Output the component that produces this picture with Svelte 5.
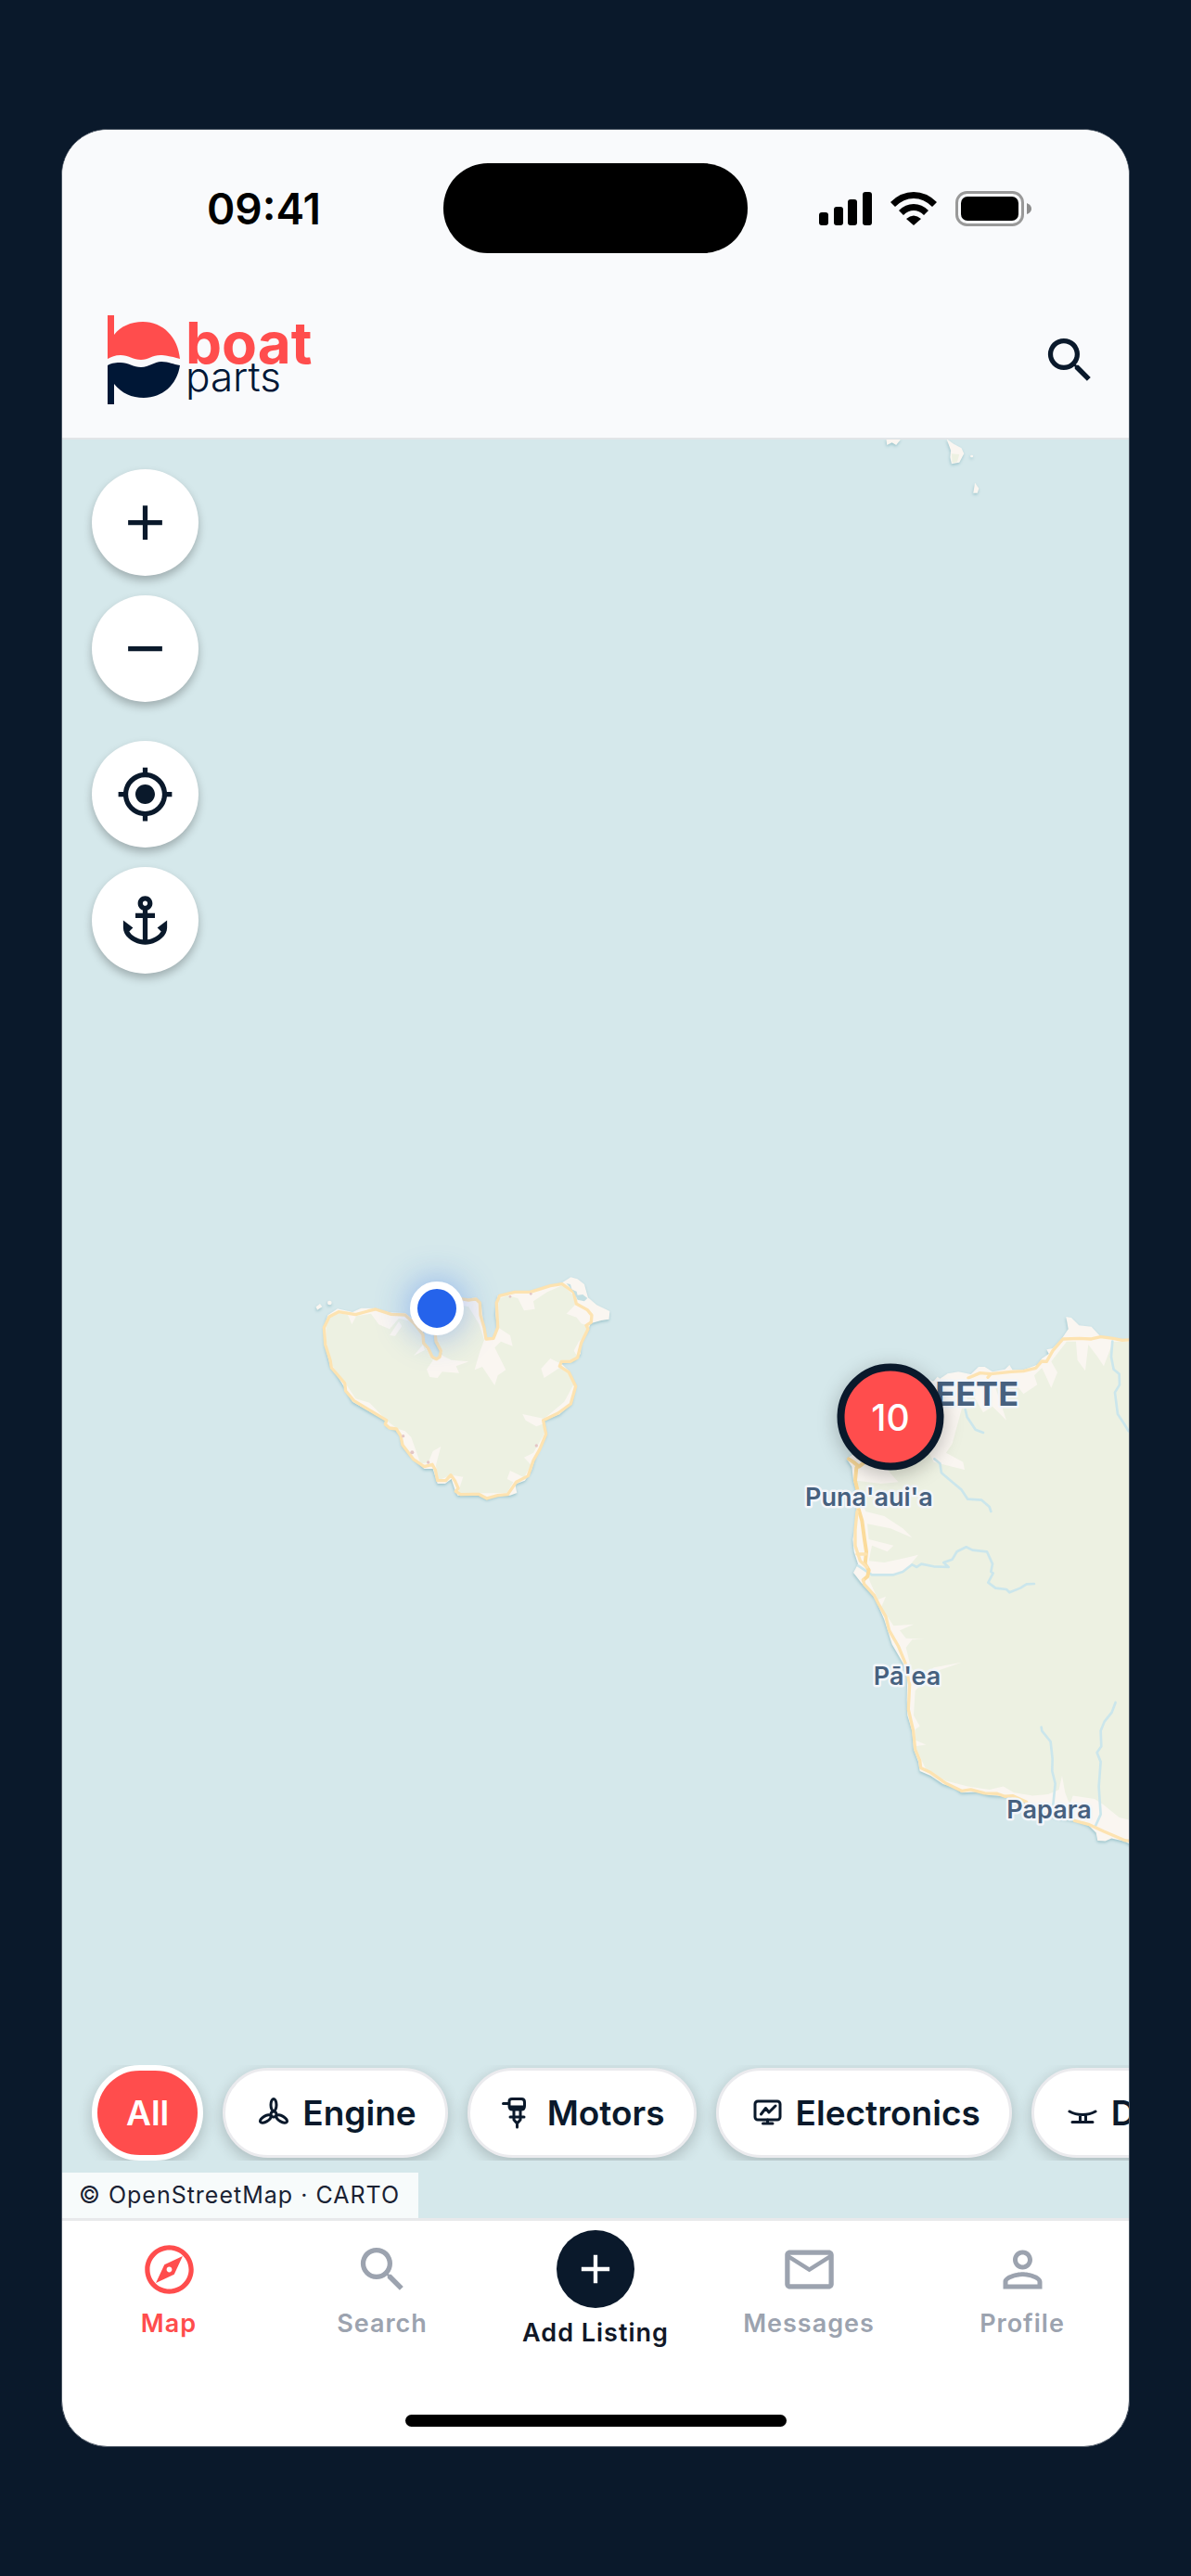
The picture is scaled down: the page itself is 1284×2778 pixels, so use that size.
<script>
  const icons = {
    search:
      'M15.5 14h-.79l-.28-.27A6.471 6.471 0 0 0 16 9.5 6.5 6.5 0 1 0 9.5 16c1.61 0 3.09-.59 4.23-1.57l.27.28v.79l5 4.99L20.49 19l-4.99-5zm-6 0C7.01 14 5 11.99 5 9.5S7.01 5 9.5 5 14 7.01 14 9.5 11.99 14 9.5 14z',
    add: 'M19 13h-6v6h-2v-6H5v-2h6V5h2v6h6v2z',
    remove: 'M19 13H5v-2h14v2z',
    locate:
      'M12 8c-2.21 0-4 1.79-4 4s1.79 4 4 4 4-1.79 4-4-1.79-4-4-4zm8.94 3A8.994 8.994 0 0 0 13 3.06V1h-2v2.06A8.994 8.994 0 0 0 3.06 11H1v2h2.06A8.994 8.994 0 0 0 11 20.94V23h2v-2.06A8.994 8.994 0 0 0 20.94 13H23v-2h-2.06zM12 19c-3.87 0-7-3.13-7-7s3.13-7 7-7 7 3.13 7 7-3.13 7-7 7z',
    anchor:
      'M17 15l1.55 1.55c-.96 1.69-3.33 3.04-5.55 3.37V11h3V9h-3V7.82C14.16 7.4 15 6.3 15 5c0-1.65-1.35-3-3-3S9 3.35 9 5c0 1.3.84 2.4 2 2.82V9H8v2h3v8.92c-2.22-.33-4.59-1.68-5.55-3.37L7 15l-4-3v3c0 3.88 4.92 7 9 7s9-3.12 9-7v-3l-4 3zM12 4c.55 0 1 .45 1 1s-.45 1-1 1-1-.45-1-1 .45-1 1-1z',
    explore:
      'M12 2C6.48 2 2 6.48 2 12s4.48 10 10 10 10-4.48 10-10S17.52 2 12 2zm0 18c-4.41 0-8-3.59-8-8s3.59-8 8-8 8 3.59 8 8-3.59 8-8 8zm-5.5-2.5l7.51-3.49L17.5 6.5 9.99 9.99 6.5 17.5zm5.5-6.6c.61 0 1.1.49 1.1 1.1s-.49 1.1-1.1 1.1-1.1-.49-1.1-1.1.49-1.1 1.1-1.1z',
    mail: 'M22 6c0-1.1-.9-2-2-2H4c-1.1 0-2 .9-2 2v12c0 1.1.9 2 2 2h16c1.1 0 2-.9 2-2V6zm-2 0l-8 5-8-5h16zm0 12H4V8l8 5 8-5v10z',
    person:
      'M12 5.9c1.16 0 2.1.94 2.1 2.1s-.94 2.1-2.1 2.1S9.9 9.16 9.9 8s.94-2.1 2.1-2.1m0 9c2.97 0 6.1 1.46 6.1 2.1v1.1H5.9V17c0-.64 3.13-2.1 6.1-2.1M12 4C9.79 4 8 5.79 8 8s1.79 4 4 4 4-1.79 4-4-1.79-4-4-4zm0 9c-2.67 0-8 1.34-8 4v3h16v-3c0-2.66-5.33-4-8-4z',
  };

  const tabs = [
    { id: 'map', label: 'Map', icon: 'explore' },
    { id: 'search', label: 'Search', icon: 'search' },
    { id: 'add', label: 'Add Listing', icon: 'add' },
    { id: 'messages', label: 'Messages', icon: 'mail' },
    { id: 'profile', label: 'Profile', icon: 'person' },
  ];
  const filters = ['All', 'Engine', 'Motors', 'Electronics', 'Deck'];

  let activeTab = $state('map');
  let activeFilter = $state('All');
</script>

{#snippet icon(name)}
  <svg class="icon" viewBox="0 0 24 24" aria-hidden="true"><path d={icons[name]} /></svg>
{/snippet}

<div class="stage">
  <main class="phone">
    <div class="status">
      <span class="time">09:41</span>
      <span class="island"></span>
      <span class="signals">
        <svg width="57" height="38" viewBox="0 0 57 38" aria-hidden="true">
          <rect x="0" y="23" width="10" height="14" rx="3" />
          <rect x="16" y="17" width="10" height="20" rx="3" />
          <rect x="31" y="9" width="10" height="28" rx="3" />
          <rect x="47" y="1" width="10" height="36" rx="3" />
        </svg>
        <svg width="50" height="38" viewBox="0 0 50 38" aria-hidden="true">
          <path d="M0 12Q11 1 25 1T50 12L45 17Q36 8 25 8T5 17Z" />
          <path d="M9 21Q16 14 25 14T41 21L36 26Q31 21 25 21T14 26Z" />
          <path d="M17 30Q25 23 33 30L25 37Z" />
        </svg>
        <svg width="82" height="38" viewBox="0 0 82 38" aria-hidden="true">
          <rect x="1.5" y="1.5" width="71" height="35" rx="11" fill="none" stroke="#999" stroke-width="3" />
          <rect x="6" y="6" width="62" height="26" rx="7" />
          <path d="M77 13Q82 15 82 19T77 25Z" fill="#8c8c8c" />
        </svg>
      </span>
    </div>

    <header class="header">
      <a class="brand" href="#home" aria-label="boat parts">
        <svg class="mark" viewBox="0 0 78 96" aria-hidden="true">
          <path
            fill="#ff4d4d"
            d="M0 0H7V21C14 12 25 7 38 7C60 7 76 24 78 47C67 44 62 43 57 43C48 43 44 48 36 48C28 48 22 43 14 43C8 43 4 45 0 47Z"
          />
          <path
            fill="#001736"
            d="M0 54C5 51 10 51 14 51C22 51 28 56 36 56C45 56 50 50 58 50C66 50 71 53 78 54C75 75 59 89 39 89C26 89 15 84 7 74V96H0Z"
          />
        </svg>
        <span class="wordmark"><span class="boat">boat</span><span class="parts">parts</span></span>
      </a>
      <button class="search" aria-label="Search">{@render icon('search')}</button>
    </header>

    <section class="map" aria-label="Map">
      <svg class="chart" viewBox="67 474 1150 1918" preserveAspectRatio="xMidYMid slice" aria-hidden="true">
        <!-- Tetiaroa -->
        <g class="land" transform="translate(660 130) scale(.3827 .3333)">
          <path class="sand" d="M772 1030H814L800 1050L788 1042L774 1050Z" />
          <path class="sand" d="M942 1030L962 1046L984 1060L991 1078L978 1106L956 1111L952 1090L954 1068Z" />
          <path class="green" d="M956 1078L978 1080L972 1104L958 1108Z" />
          <path class="sand" d="M1022 1172L1033 1190L1029 1205H1017Z" />
          <circle class="sand" cx="1013" cy="1086" r="4" />
        </g>

        <!-- Moorea -->
        <g transform="translate(320 1350) scale(.3333)">
          <g class="land">
            <path
              class="sand"
              d="M100 205L132 184L180 195L208 182L250 182L300 196L350 198L385 225L408 250L408 292L440 348L458 350L470 330L448 290L446 262L500 160L548 152L580 148L596 165L602 215L610 280L636 282L650 250L642 200L650 142L700 128L750 128L820 108L858 100L886 82L908 88L930 105L942 148L970 172L1012 192L1010 218L985 222L950 232L944 250L920 290L918 330L896 352L852 358L880 385L902 430L890 490L850 526L800 545L808 590L775 655L760 705L738 740L706 752L712 780L690 788L655 788L615 800L590 788L520 788L512 772L500 735L480 750L455 750L440 702L412 702L370 660L340 625L335 590L320 575L290 562L286 545L240 520L180 485L155 440L130 400L108 370L90 300L88 245Z"
            />
            <path class="sand" d="M62 178L75 168L82 178L66 188Z" />
            <circle class="sand" cx="106" cy="165" r="7" />
          </g>
          <path
            class="green"
            d="M108 214L135 198L165 204L178 235L192 208L240 200L265 235L300 250L330 215L370 225L405 262L408 296L440 352L420 380L430 405L455 408L470 388L525 392L515 370L556 355L500 350L470 335L470 318L452 290L448 268L520 170L556 178L590 235L606 285L590 330L575 382L600 372L640 432L650 400L676 382L655 340L640 310L660 290L698 305L690 270L652 245L652 152L682 142L715 150L735 190L770 185L765 160L810 130L860 108L895 140L900 172L872 200L905 212L920 232L945 240L930 275L912 290L896 320L912 345L850 360L820 345L790 378L800 408L850 375L880 395L895 430L865 485L800 540L730 525L740 545L775 565L800 555L800 590L765 650L735 665L758 690L735 730L690 708L680 735L700 745L680 780L520 782L538 728L500 722L455 740L450 690L466 630L440 645L425 682L400 685L370 600L350 580L325 572L290 545L235 488L190 475L160 430L112 365L95 290L95 240Z"
          />
          <path class="sand" d="M300 270L330 225L340 240L318 272ZM378 336L408 300L414 318ZM456 340L520 358L500 388L448 372Z" />
          <path
            class="road"
            d="M448 270L450 290L466 320L462 340L452 347L438 340L425 312L410 295L408 268L380 232L350 204L305 202L255 186L230 192L190 203L135 194L105 210L88 245L92 300L108 350L112 375L155 425L158 450L185 482L240 515L290 545L286 558L300 570L322 573L336 595L342 625L378 672L412 695L438 688L448 705L455 740L482 740L498 722L512 742L522 765L514 775L530 785L588 784L615 798L650 788L682 785L710 745L748 725L765 675L785 640L806 590L797 545L845 522L886 492L902 435L880 390L850 370L856 355L885 355L908 342L920 295L942 250L936 238L952 228L954 205L940 188L904 168L895 130L858 104L820 110L755 130L705 130L656 142L646 165L650 245L636 280L612 282L606 245L594 205L592 165L580 153L555 156L530 152"
          />
          <path class="sea" d="M872 102L885 105L890 122L905 128L908 140L925 138L940 150L930 160L908 155L896 130Z" />
          <g fill="#e3c6c6">
            <circle cx="344" cy="596" r="5" /><circle cx="373" cy="649" r="6" /><circle cx="425" cy="681" r="5" />
            <circle cx="775" cy="627" r="5" /><circle cx="690" cy="145" r="4" /><circle cx="757" cy="136" r="4" />
          </g>
        </g>

        <!-- Tahiti -->
        <g transform="translate(840 1400) scale(.3333)">
          <g class="land">
            <path
              class="sand"
              d="M400 300L500 268L512 254L520 260L545 244L580 238L620 246L645 222L665 222L690 238L730 230L745 216L755 232L790 232L835 215L850 195L872 180L865 166L885 162L915 130L935 100L928 60L945 63L970 88L1010 92L1038 122L1080 130L1140 136V1770L1120 1758L1075 1748L1055 1757L1030 1755L1025 1730L1000 1705L960 1690L900 1680L830 1655L780 1625L740 1612L680 1608L640 1598L590 1600L570 1585L530 1572L490 1545L455 1530L450 1500L435 1460L430 1400L415 1350L413 1300L415 1220L400 1180L365 1120L340 1040L310 970L265 920L240 888L255 860L242 820L238 780L245 740L250 690L255 640L240 590L235 545L218 520L235 508L300 420Z"
            />
          </g>
          <path
            class="green"
            d="M590 360L620 300L660 370L690 350L735 395L700 290L760 270L790 310L835 280L825 250L850 225L880 290L900 240L880 205L930 140L960 140L965 200L990 235L1000 150L1030 190L1050 220L1080 140L1140 140V1690L1100 1680L1050 1640L1020 1620L950 1610L940 1640L925 1600L915 1545L905 1590L870 1605L820 1610L760 1600L725 1580L680 1590L610 1580L540 1562L475 1525L440 1450L475 1445L440 1430L440 1395L455 1385L435 1350L440 1270L500 1210L590 1178L500 1195L450 1240L425 1190L410 1130L430 1105L470 1103L410 1100L390 1075L435 1055L370 1060L330 1000L345 965L320 975L295 920L285 895L370 895L410 880L450 830L410 840L340 855L290 850L300 800L350 820L370 800L290 780L285 730L360 745L430 775L400 745L340 705L280 690L260 640L250 590L330 600L385 595L350 555L480 490L500 530L560 545L600 555L595 530L540 500L560 470Z"
          />
          <g class="river">
            <path d="M602 360L608 385L635 425L660 435" />
            <path d="M502 520L520 535L525 565L560 595L590 620L610 650L655 653L680 675L685 690" />
            <path d="M255 865L300 895L370 895L400 885L430 862L445 870L460 860L500 868L548 870L532 855L560 845L575 820L605 805L625 815L672 820L690 860L685 885L692 890L676 920L700 938L735 942L745 952L780 938L800 925L825 924" />
            <path d="M1078 140L1074 190L1082 230L1100 245L1101 280L1086 305L1095 375L1115 405L1130 430" />
            <path d="M848 1388L850 1400L878 1435L884 1490L883 1530L893 1570L886 1640" />
            <path d="M1088 1308L1076 1340L1052 1370L1040 1400L1042 1450L1028 1470L1040 1500L1034 1580L1040 1670L1022 1710" />
          </g>
          <path
            class="road"
            d="M1140 134L1110 136L1080 130L1040 125L1010 132L970 130L918 132L885 170L865 205L850 204L830 226L790 236L750 238L685 245L650 242L612 258M685 245L675 256"
          />
          <path
            class="road wide"
            d="M225 520L240 530L258 545L275 532M250 548L246 590L258 640L256 680L268 720L276 780L282 820L278 860L290 880L286 900L272 912"
          />
          <path
            class="road"
            d="M252 690L246 750L246 800L262 850L284 870M252 828H280M272 912L275 925L308 962L322 990L345 1030L356 1075L385 1125L408 1180L422 1250L418 1330L434 1400L440 1460L455 1495L458 1520L490 1535L540 1570L590 1594L620 1590L665 1602L705 1603L730 1612L755 1610L800 1630M955 1690L1000 1702L1050 1725L1120 1755L1140 1756"
          />
        </g>

        <g class="places">
          <text class="city" x="1098" y="1516" text-anchor="end">PAPEETE</text>
          <text x="937" y="1624" text-anchor="middle">Puna'aui'a</text>
          <text x="978" y="1817" text-anchor="middle">Pā'ea</text>
          <text x="1131" y="1961" text-anchor="middle">Papara</text>
        </g>
      </svg>

      <span class="me" role="img" aria-label="Your location"></span>
      <button class="cluster" aria-label="10 listings">10</button>

      <div class="controls">
        <div class="group">
          <button aria-label="Zoom in">{@render icon('add')}</button>
          <button aria-label="Zoom out">{@render icon('remove')}</button>
        </div>
        <div class="group">
          <button aria-label="My location">{@render icon('locate')}</button>
          <button aria-label="Marinas">{@render icon('anchor')}</button>
        </div>
      </div>

      <div class="bottom">
        <div class="chips">
          {#each filters as name (name)}
            <button class="chip" class:active={activeFilter === name} onclick={() => (activeFilter = name)}>
              {#if name !== 'All'}
                <svg class="glyph" viewBox="0 0 42 42" aria-hidden="true">
                  {#if name === 'Engine'}
                    <circle cx="21" cy="22" r="3" />
                    {#each [0, 120, 240] as turn (turn)}
                      <ellipse cx="21" cy="12" rx="3" ry="6.5" transform="rotate({turn} 21 22)" />
                    {/each}
                  {:else if name === 'Motors'}
                    <path d="M4.500 10.500H11M14 5.500H24Q27.500 5.500 27.500 9V13Q27.500 17 24 17H14.500Q11 17 11 13V8Q11 5.500 14 5.500ZM11 14H27M16 17V28L19.500 32L23 28V17M19.500 31V36M12 25H27" />
                  {:else if name === 'Electronics'}
                    <rect x="8" y="8" width="27" height="20" rx="3" />
                    <path d="M14.500 22L19.500 15.500L23 20L30 13M21.500 28V31.500M16.500 32H27" />
                  {:else}
                    <path d="M7 19Q13 22.500 21 22.500T35 19M18.500 23V30M24.500 23V30M10 30.500H32" />
                  {/if}
                </svg>
              {/if}
              {name}
            </button>
          {/each}
        </div>
        <p class="credit">© OpenStreetMap · CARTO</p>
      </div>
    </section>

    <nav class="tabs" aria-label="Main">
      {#each tabs as tab (tab.id)}
        <button
          class="tab"
          class:active={activeTab === tab.id}
          class:primary={tab.id === 'add'}
          onclick={() => (activeTab = tab.id)}
        >
          <span class="badge">{@render icon(tab.icon)}</span>
          <span>{tab.label}</span>
        </button>
      {/each}
    </nav>
    <div class="home"><span></span></div>
  </main>
</div>

<style>
  :global(body) {
    background: #0a192b;
  }
  .stage {
    box-sizing: border-box;
    min-height: 100vh;
    display: flex;
    padding: 139px 66px;
    font-family: Inter, 'Liberation Sans', sans-serif;
    color: #0a192b;
  }
  .phone {
    flex: 1;
    min-width: 0;
    display: flex;
    flex-direction: column;
    overflow: hidden;
    border: 1px solid #4a5563;
    border-radius: 50px;
    background: #fff;
  }
  button {
    margin: 0;
    padding: 0;
    border: 0;
    background: none;
    font: inherit;
    color: inherit;
    cursor: pointer;
  }
  .icon {
    display: block;
    width: 63px;
    height: 63px;
    fill: currentColor;
  }

  .status {
    display: grid;
    grid-template-columns: 1fr 328px 1fr;
    align-items: center;
    padding: 36px 0 28px;
    background: #f9fafc;
    color: #000;
  }
  .time {
    padding-left: 24px;
    text-align: center;
    font-size: 46px;
    line-height: 56px;
    font-weight: 600;
  }
  .island {
    height: 97px;
    border-radius: 48px;
    background: #000;
  }
  .signals {
    display: flex;
    gap: 20px;
    padding-left: 77px;
  }

  .header {
    display: flex;
    align-items: center;
    justify-content: space-between;
    padding: 39px 32px 36px 49px;
    border-bottom: 2px solid #e2e5e8;
    background: #f9fafc;
  }
  .brand {
    display: flex;
    gap: 6px;
    text-decoration: none;
  }
  .mark {
    width: 78px;
    height: 96px;
  }
  .wordmark {
    display: flex;
    flex-direction: column;
    padding-top: 4px;
  }
  .boat {
    font-size: 62px;
    line-height: 52px;
    font-weight: 700;
    color: #ff4d4d;
  }
  .parts {
    font-size: 44px;
    line-height: 20px;
    font-weight: 300;
    color: #001736;
  }

  .map {
    flex: 1;
    position: relative;
    display: flex;
    flex-direction: column;
    justify-content: space-between;
    min-height: 1200px;
    overflow: hidden;
    background: #d5e8eb;
  }
  .chart {
    position: absolute;
    inset: 0;
    width: 100%;
    height: 100%;
  }
  .land {
    filter: drop-shadow(-1px 5px 4px #9cc4cb);
  }
  .sand {
    fill: #faf6f1;
  }
  .green {
    fill: #edf1e2;
  }
  .sea {
    fill: #c4dfe2;
  }
  .road,
  .river {
    fill: none;
    stroke-linecap: round;
    stroke-linejoin: round;
  }
  .road {
    stroke: #fde3b1;
    stroke-width: 10;
  }
  .wide {
    stroke: #fbdb9b;
    stroke-width: 12;
  }
  .river {
    stroke: #cbe6ec;
    stroke-width: 8;
  }
  .places {
    font-size: 27px;
    font-weight: 600;
    fill: #47617f;
    stroke: #f3f6fa;
    stroke-width: 5px;
    stroke-linejoin: round;
    paint-order: stroke;
  }
  .city {
    font-size: 36px;
    font-weight: 700;
  }

  .me,
  .cluster {
    position: absolute;
    box-sizing: border-box;
    transform: translate(-50%, -50%);
    border-radius: 50%;
  }
  .me {
    left: 404px;
    top: 937px;
    width: 58px;
    height: 58px;
    border: 8px solid #fff;
    background: #2563eb;
    box-shadow: 0 0 36px 2px rgba(37, 99, 235, 0.4);
  }
  .cluster {
    left: 893px;
    top: 1054px;
    width: 115px;
    height: 115px;
    border: 8px solid #0a192b;
    background: #ff4d4d;
    color: #fff;
    font-size: 39px;
    font-weight: 500;
    box-shadow: 0 5px 21px rgba(0, 0, 0, 0.25);
  }

  .controls {
    position: relative;
    align-self: flex-start;
    display: flex;
    flex-direction: column;
    gap: 42px;
    padding: 32px;
  }
  .group {
    display: flex;
    flex-direction: column;
    gap: 21px;
  }
  .controls button {
    display: grid;
    place-items: center;
    width: 115px;
    height: 115px;
    border-radius: 50%;
    background: #fff;
    box-shadow: 0 5px 10px rgba(0, 0, 0, 0.25);
  }

  .bottom {
    position: relative;
  }
  .chips {
    display: flex;
    align-items: center;
    gap: 21px;
    padding-left: 32px;
    overflow: hidden;
  }
  .chip {
    flex: none;
    display: flex;
    align-items: center;
    gap: 10px;
    padding: 0 31px;
    border: 3px solid #ebebee;
    border-radius: 52px;
    background: #fff;
    font-size: 37px;
    line-height: 91px;
    font-weight: 600;
    box-shadow: 0 5px 16px rgba(0, 0, 0, 0.2);
  }
  .chip.active {
    border: 6px solid #fff;
    background: #ff4d4d;
    color: #fff;
  }
  .glyph {
    width: 42px;
    height: 42px;
    fill: none;
    stroke: currentColor;
    stroke-width: 3;
    stroke-linecap: round;
    stroke-linejoin: round;
  }
  .credit {
    width: fit-content;
    margin: 13px 0 0;
    padding: 0 20px 0 18px;
    background: rgba(255, 255, 255, 0.8);
    font-size: 25px;
    line-height: 49px;
    letter-spacing: 1px;
    color: #1a2233;
  }

  .tabs {
    display: grid;
    grid-template-columns: repeat(5, 1fr);
    align-items: start;
    padding-top: 10px;
    border-top: 3px solid #e8e9eb;
  }
  .tab {
    display: flex;
    flex-direction: column;
    align-items: center;
    font-size: 27px;
    line-height: 34px;
    font-weight: 600;
    letter-spacing: 1px;
    color: #9ca3af;
  }
  .badge {
    display: grid;
    place-items: center;
    height: 84px;
  }
  .tab.active {
    color: #ff4d4d;
  }
  .tab.primary {
    gap: 10px;
    color: #111827;
  }
  .primary .badge {
    width: 84px;
    border-radius: 50%;
    background: #0a192b;
    color: #fff;
  }
  .primary .icon {
    width: 52px;
    height: 52px;
  }
  .home {
    display: flex;
    justify-content: center;
    padding: 71px 0 21px;
  }
  .home span {
    width: 411px;
    height: 13px;
    border-radius: 7px;
    background: #000;
  }
</style>
